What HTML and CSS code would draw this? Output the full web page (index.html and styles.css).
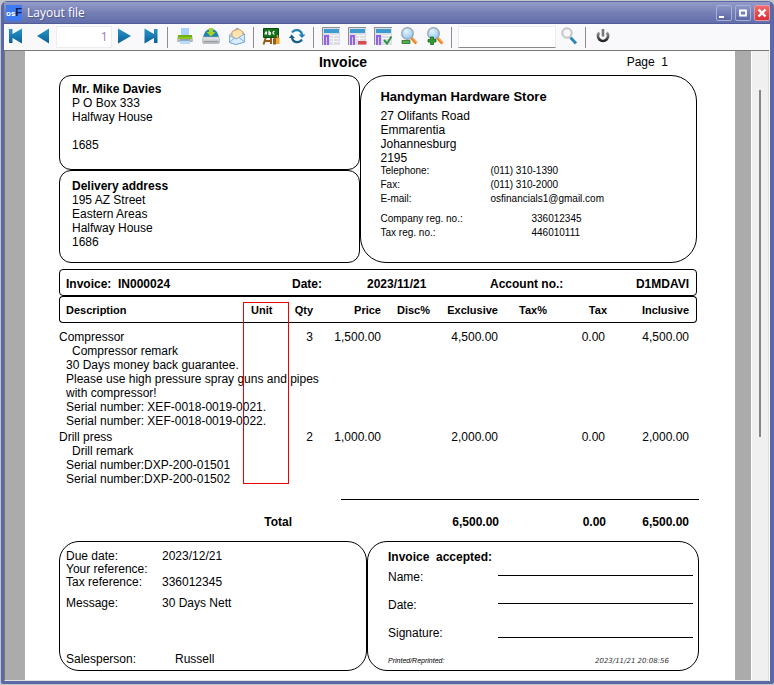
FILE: index.html
```html
<!DOCTYPE html>
<html lang="en">
<head>
<meta charset="utf-8">
<title>Layout file</title>
<link rel="stylesheet" href="styles.css">
</head>
<body>
<div class="window">
  <header class="titlebar">
    <span class="app-icon" aria-hidden="true"><span class="app-os">os</span><span class="app-f">F</span></span>
    <h1 class="window-title">Layout file</h1>
    <button class="win-btn" type="button" aria-label="Minimize"><svg width="16" height="16" viewBox="0 0 16 16"><path d="M3 11h5v2H3z" fill="#fff"/></svg></button>
    <button class="win-btn" type="button" aria-label="Maximize"><svg width="16" height="16" viewBox="0 0 16 16"><path d="M5 5.500h6v5H5z" fill="none" stroke="#fff" stroke-width="1.800"/></svg></button>
    <button class="win-btn win-close" type="button" aria-label="Close"><svg width="16" height="16" viewBox="0 0 16 16"><path d="M4.500 4.500l7 7M11.500 4.500l-7 7" stroke="#fff" stroke-width="2.400"/></svg></button>
  </header>

  <nav class="toolbar" aria-label="Preview">
    <svg class="defs" width="0" height="0" aria-hidden="true">
      <defs>
        <linearGradient id="blue" x1="0" y1="0" x2="0" y2="1"><stop offset="0" stop-color="#2a96c8"/><stop offset="1" stop-color="#0a5f96"/></linearGradient>
        <linearGradient id="metal" x1="0" y1="0" x2="0" y2="1"><stop offset="0" stop-color="#eef0f2"/><stop offset="1" stop-color="#a8adb2"/></linearGradient>
        <radialGradient id="lens" cx=".4" cy=".3" r=".8"><stop offset="0" stop-color="#e6f5ff"/><stop offset="1" stop-color="#86bff0"/></radialGradient>
        <linearGradient id="dark" x1="0" y1="0" x2="0" y2="1"><stop offset="0" stop-color="#999"/><stop offset="1" stop-color="#222"/></linearGradient>
      </defs>
    </svg>
    <button class="tool" type="button" aria-label="First page"><svg width="18" height="18" viewBox="0 0 18 18"><path d="M1 2h3.500v5L14 1.500v15L4.500 11v5H1z" fill="url(#blue)"/></svg></button>
    <button class="tool" type="button" aria-label="Previous page"><svg width="18" height="18" viewBox="0 0 18 18"><path d="M3 9L15 1.500v15z" fill="url(#blue)"/></svg></button>
    <input class="page-no" type="text" value="1" aria-label="Page number">
    <button class="tool" type="button" aria-label="Next page"><svg width="18" height="18" viewBox="0 0 18 18"><path d="M15 9L2 1.500v15z" fill="url(#blue)"/></svg></button>
    <button class="tool" type="button" aria-label="Last page"><svg width="18" height="18" viewBox="0 0 18 18"><path d="M15.500 2H12v5L2.500 1.500v15L12 11v5h3.500z" fill="url(#blue)"/></svg></button>
    <span class="sep"></span>
    <button class="tool" type="button" aria-label="Print"><svg width="18" height="18" viewBox="0 0 18 18"><path d="M5 1h8v8H5z" fill="#a9d3fa"/><rect x="1" y="8" width="16" height="7" rx="1.500" fill="url(#metal)"/><rect x="2" y="8" width="14" height="4" fill="#8ac71c"/><path d="M2 9h14" stroke="#5c9410"/><path d="M4 13h10v4H4z" fill="#b9dcfa"/><path d="M4 13h10" stroke="#6e7a84"/></svg></button>
    <button class="tool" type="button" aria-label="Save"><svg width="18" height="18" viewBox="0 0 18 18"><path d="M1 11C2 5 4.500 2 9 2s7 3 8 9z" fill="#2583b4"/><rect x=".5" y="10" width="17" height="6.500" rx="1.500" fill="url(#metal)" stroke="#a2a7ab" stroke-width=".5"/><path d="M2 14.500h14" stroke="#92979c" stroke-width=".8"/><path d="M7 1h4v4h2.500L9 9.500 4.500 5H7z" fill="#a4d51b"/></svg></button>
    <button class="tool" type="button" aria-label="E-mail"><svg width="18" height="18" viewBox="0 0 18 18"><path d="M1.500 8L9 1l7.500 6v8L8 17.500l-6.500-2z" fill="#c6e0f7" stroke="#7eaede"/><path d="M4 4.500l7-2.500 4 3v4.500l-6 3-5-3z" fill="#ffe3b0" stroke="#dc9c52"/><path d="M1.500 8.500l7 3.500 8-5v8L8 17.500l-6.500-2z" fill="#dceefc" stroke="#79aadc" stroke-width=".9"/><path d="M1.500 15.500l5-4.500M16.500 15l-5.500-4.500" stroke="#79aadc" fill="none"/></svg></button>
    <span class="sep"></span>
    <button class="tool" type="button" aria-label="Design"><svg width="18" height="18" viewBox="0 0 18 18"><path d="M4 10L1.500 17.500M9 10v7M3 14h7" stroke="#9a5a1c" stroke-width="2"/><path d="M1.500 1.500h15v9h-15z" fill="#14701a" stroke="#0b4a10"/><path d="M3 7.500c1-4 2-3 1.500 0M7 3.500v4c2 .500 2-2.500.300-2M12.500 4.500c-2-.500-2 3 0 2.500" fill="none" stroke="#fff" stroke-width="1.200"/><path d="M13 11h4.500v6H13z" fill="#eba925"/><path d="M11 12l2-2 1 2v5.500h-3z" fill="#9a5a1c"/><path d="M15.500 8v4" stroke="#e8913c" stroke-width="1.500"/></svg></button>
    <button class="tool" type="button" aria-label="Refresh"><svg width="18" height="18" viewBox="0 0 18 18"><path d="M4 5.500C6.500 1.500 13.500 2.500 14 8" fill="none" stroke="#1d80b7" stroke-width="2.200"/><path d="M4 10.500c.8 5.500 7.500 6 10 2" fill="none" stroke="#135f92" stroke-width="2.200"/><path d="M10.500 7.500h7L14 11z" fill="#1d80b7"/><path d="M1 11h6L3.500 7.500z" fill="#135f92"/></svg></button>
    <span class="sep"></span>
    <button class="tool" type="button" aria-label="Form"><svg width="20" height="18" viewBox="0 0 20 18"><path d="M1 0h18v18H1z" fill="#dcdee3"/><path d="M1.500 18V.500H19" fill="none" stroke="#8b8e95"/><path d="M3 2h15v4H3z" fill="#3d9bd0"/><path d="M3 8h5v10H3z" fill="#9360e8"/><path d="M5 10h1v8H5z" fill="#dccbfb"/><path d="M9 8.500h9M9 11.500h9M9 14.500h9M12.500 8v9" stroke="#f6f7f9"/></svg></button>
    <button class="tool" type="button" aria-label="Form remove"><svg width="20" height="18" viewBox="0 0 20 18"><path d="M1 0h18v18H1z" fill="#dcdee3"/><path d="M1.500 18V.500H19" fill="none" stroke="#8b8e95"/><path d="M3 2h15v4H3z" fill="#3d9bd0"/><path d="M3 8h5v10H3z" fill="#9360e8"/><path d="M5 10h1v8H5z" fill="#dccbfb"/><path d="M9 8.500h9M9 11.500h9M12.500 8v6" stroke="#f6f7f9"/><path d="M11 14h8.500v3.500H11z" fill="#d94b52"/></svg></button>
    <button class="tool" type="button" aria-label="Form accept"><svg width="20" height="18" viewBox="0 0 20 18"><path d="M1 0h18v18H1z" fill="#dcdee3"/><path d="M1.500 18V.500H19" fill="none" stroke="#8b8e95"/><path d="M3 2h15v4H3z" fill="#3d9bd0"/><path d="M3 8h5v10H3z" fill="#9360e8"/><path d="M5 10h1v8H5z" fill="#dccbfb"/><path d="M9 8.500h9M9 11.500h9M9 14.500h9" stroke="#f6f7f9"/><path d="M11 13l3 3.500 4.500-7" fill="none" stroke="#2d9344" stroke-width="2"/></svg></button>
    <button class="tool" type="button" aria-label="Zoom out"><svg width="18" height="18" viewBox="0 0 18 18"><path d="M11.500 11l5 5.500" stroke="#ef7d1c" stroke-width="3"/><path d="M12 10.500l5 5.500" stroke="#ffc173"/><circle cx="7.500" cy="6.500" r="5.800" fill="url(#lens)" stroke="#9aa2a9" stroke-width="1.300"/><path d="M2 13.500h8v3H2z" fill="#59ad45" stroke="#256f23" stroke-width=".8"/></svg></button>
    <button class="tool" type="button" aria-label="Zoom in"><svg width="18" height="18" viewBox="0 0 18 18"><path d="M11.500 11l5 5.500" stroke="#ef7d1c" stroke-width="3"/><path d="M12 10.500l5 5.500" stroke="#ffc173"/><circle cx="7.500" cy="6.500" r="5.800" fill="url(#lens)" stroke="#9aa2a9" stroke-width="1.300"/><path d="M4.500 10h3v2.500H10v2.500H7.500v2.500h-3V15H2v-2.500h2.500z" fill="#2f9c35" stroke="#17691d" stroke-width=".8"/></svg></button>
    <span class="sep"></span>
    <input class="search" type="text" aria-label="Search text">
    <button class="tool" type="button" aria-label="Search"><svg width="18" height="18" viewBox="0 0 18 18"><path d="M10.500 10.500l5.500 6" stroke="#2f87b4" stroke-width="3"/><circle cx="7" cy="6" r="4.700" fill="#f4f6f7" stroke="#c3c5c8" stroke-width="2"/></svg></button>
    <span class="sep"></span>
    <button class="tool" type="button" aria-label="Close preview"><svg width="18" height="18" viewBox="0 0 18 18"><path d="M5.300 5.500a5 5 0 1 0 7.400 0" fill="none" stroke="url(#dark)" stroke-width="2.800"/><path d="M9 2v7.500" stroke="#777" stroke-width="2.600"/></svg></button>
  </nav>

  <main class="viewer">
    <article class="sheet">
      <div class="sheet-head">
        <h2 class="doc-title">Invoice</h2>
        <span class="page-label">Page&nbsp; 1</span>
      </div>

      <section class="parties">
        <div class="box customer">
          <strong>Mr. Mike Davies</strong><br>P O Box 333<br>Halfway House<br><br>1685
        </div>
        <div class="box delivery">
          <strong>Delivery address</strong><br>195 AZ Street<br>Eastern Areas<br>Halfway House<br>1686
        </div>
        <div class="box company">
          <h3 class="company-name">Handyman Hardware Store</h3>
          <p class="company-address">27 Olifants Road<br>Emmarentia<br>Johannesburg<br>2195</p>
          <dl class="contacts">
            <dt>Telephone:</dt><dd>(011) 310-1390</dd>
            <dt>Fax:</dt><dd>(011) 310-2000</dd>
            <dt>E-mail:</dt><dd>osfinancials1@gmail.com</dd>
          </dl>
          <dl class="contacts registrations">
            <dt>Company reg. no.:</dt><dd>336012345</dd>
            <dt>Tax reg. no.:</dt><dd>446010111</dd>
          </dl>
        </div>
      </section>

      <section class="reference">
        <span>Invoice:&nbsp; IN000024</span>
        <span>Date:</span>
        <span>2023/11/21</span>
        <span>Account no.:</span>
        <span class="account">D1MDAVI</span>
      </section>

      <section class="lines">
        <table class="items">
          <colgroup>
            <col class="c-desc"><col class="c-unit"><col class="c-qty"><col class="c-amount"><col class="c-rate"><col class="c-amount"><col class="c-rate"><col class="c-tax"><col class="c-incl">
          </colgroup>
          <thead>
            <tr><th>Description</th><th>Unit</th><th>Qty</th><th>Price</th><th>Disc%</th><th>Exclusive</th><th>Tax%</th><th>Tax</th><th>Inclusive</th></tr>
          </thead>
          <tbody>
            <tr>
              <td>Compressor
                <div class="remark">Compressor remark</div>
                <div class="detail">30 Days money back guarantee.</div>
                <div class="detail">Please use high pressure spray guns and pipes</div>
                <div class="detail">with compressor!</div>
                <div class="detail">Serial number: XEF-0018-0019-0021.</div>
                <div class="detail">Serial number: XEF-0018-0019-0022.</div>
              </td>
              <td></td><td>3</td><td>1,500.00</td><td></td><td>4,500.00</td><td></td><td>0.00</td><td>4,500.00</td>
            </tr>
            <tr>
              <td>Drill press
                <div class="remark">Drill remark</div>
                <div class="detail">Serial number:DXP-200-01501</div>
                <div class="detail">Serial number:DXP-200-01502</div>
              </td>
              <td></td><td>2</td><td>1,000.00</td><td></td><td>2,000.00</td><td></td><td>0.00</td><td>2,000.00</td>
            </tr>
          </tbody>
        </table>
        <div class="unit-marker"></div>
      </section>

      <hr class="total-rule">
      <section class="totals">
        <span class="total-label">Total</span><span>6,500.00</span><span>0.00</span><span>6,500.00</span>
      </section>

      <section class="closing">
        <div class="box terms">
          <dl class="terms-list">
            <dt>Due date:</dt><dd>2023/12/21</dd>
            <dt>Your reference:</dt><dd></dd>
            <dt>Tax reference:</dt><dd>336012345</dd>
          </dl>
          <dl class="terms-list message">
            <dt>Message:</dt><dd>30 Days Nett</dd>
          </dl>
          <dl class="terms-list salesperson">
            <dt>Salesperson:</dt><dd>Russell</dd>
          </dl>
        </div>
        <div class="box accepted">
          <strong>Invoice&nbsp; accepted:</strong>
          <div class="sign-row"><span>Name:</span><span class="sign-line"></span></div>
          <div class="sign-row"><span>Date:</span><span class="sign-line"></span></div>
          <div class="sign-row signature"><span>Signature:</span><span class="sign-line"></span></div>
          <div class="printed"><span>Printed/Reprinted:</span><time>2023/11/21 20:08:56</time></div>
        </div>
      </section>
    </article>
    <div class="scrollbar"><div class="thumb"></div></div>
  </main>
</div>
</body>
</html>
```

FILE: styles.css
```css
* { box-sizing: border-box; }

body {
  margin: 0;
  min-height: 100vh;
  padding: 1px 0;
  display: flex;
  background: #c2c4ca;
  color: #000;
  font: 12px/14px "Liberation Sans", Arial, sans-serif;
}

h1, h2, h3, p, dl, dd { margin: 0; }

.window {
  flex: 1;
  display: flex;
  flex-direction: column;
  margin-left: 1px;
  border: solid #5a68a6;
  border-width: 1px 4px 3px 3px;
  border-radius: 6px 6px 2px 2px;
  background: #f9f9fc;
}

/* Title bar */
.titlebar {
  display: flex;
  align-items: center;
  height: 22px;
  padding: 0 0 0 2px;
  border-bottom: 1px solid #515d9a;
  background: linear-gradient(#939bc8, #7680b6 50%, #626eaa);
}

.app-icon {
  width: 16px;
  height: 16px;
  background: #3f7bf0;
  color: #fff;
  font-size: 8px;
  font-weight: bold;
  line-height: 15px;
  text-align: center;
}

.app-f { color: #10184c; font-size: 11px; }

.window-title {
  flex: 1;
  margin-left: 5px;
  color: #fff;
  font: 12px/18px "Open Sans", "Noto Sans", sans-serif;
  text-shadow: 1px 1px 1px #4c568c;
}

.win-btn {
  width: 16px;
  height: 16px;
  margin-left: 3px;
  padding: 0;
  border: 1px solid #a9b0d6;
  border-radius: 2px;
  background: linear-gradient(#8c95c6, #5c68a6);
}

.win-btn svg { display: block; margin: -1px; }
.win-close { border-color: #e89aa4; background: linear-gradient(#f46a6c, #d92f38); }

/* Toolbar */
.toolbar {
  display: flex;
  align-items: center;
  height: 26px;
}

.defs { position: absolute; }

.tool {
  width: 26px;
  height: 24px;
  padding: 0 1px 2px 0;
  border: 0;
  background: none;
  display: flex;
  align-items: center;
  justify-content: center;
}

.page-no, .search {
  height: 22px;
  border: 1px solid #ececf0;
  background: #fff;
}

.page-no {
  width: 56px;
  padding: 0 3px 3px;
  color: #9a7fc6;
  font: 13px "Open Sans", sans-serif;
  text-align: right;
}

.search {
  width: 98px;
  margin-left: 2px;
  border-bottom-color: #8a8a8a;
}

.sep {
  width: 1px;
  height: 21px;
  margin: 0 4px 0 3px;
  background: #8d8d90;
}

/* Page preview */
.viewer {
  flex: 1;
  display: flex;
  margin-right: 1px;
  border: solid #77777a;
  border-width: 1px 0 0 1px;
  border-bottom: 1px solid #e4e2e0;
  background: #ababab;
}

.sheet {
  flex: 1;
  margin: 0 16px 0 20px;
  padding: 0 36px 8px 34px;
  background: #fff;
}

.scrollbar {
  width: 18px;
  padding: 39px 8px 0;
  border-left: 1px solid #fff;
  border-right: 1px solid #e0e0e0;
  background: #f0f0f0;
}

.thumb { width: 2px; height: 347px; margin-left: -1px; background: #868686; }

.sheet-head {
  display: grid;
  grid-template-columns: 1fr auto 1fr;
  line-height: 22px;
  padding-bottom: 2px;
  margin-right: 72px;
}

.doc-title { grid-column: 2; font-size: 14px; line-height: 22px; }
.page-label { justify-self: end; margin-right: -41px; }

.box { border: 1px solid #000; }

.parties {
  display: grid;
  grid-template-columns: 301fr 336fr;
  grid-template-rows: minmax(95px, auto) minmax(93px, auto);
  margin-right: 2px;
}

.customer, .delivery { padding: 6px 12px; border-radius: 12px; }
.delivery { padding-top: 8px; }

.company {
  grid-area: 1 / 2 / 3 / 3;
  padding: 11px 19px 0;
  border-radius: 26px;
}

.company-name { font-size: 13px; line-height: 20px; }
.company-address { margin-top: 2px; }

.contacts {
  display: grid;
  grid-template-columns: 110px 1fr;
  row-gap: 2px;
  font-size: 10px;
  line-height: 12px;
}

.registrations {
  grid-template-columns: 151px 1fr;
  margin-top: 8px;
}

.reference {
  display: grid;
  grid-template-columns: 226fr 75fr 123fr 100fr 99fr;
  margin: 6px 2px 0 0;
  padding: 7px 7px 4px 6px;
  border: 1px solid #000;
  border-radius: 4px;
  font-weight: bold;
}

.account { text-align: right; }

/* Invoice lines */
.lines { position: relative; margin-right: 2px; }

.items {
  width: 100%;
  table-layout: fixed;
  border-collapse: separate;
  border-spacing: 0;
}

.c-desc { width: 184px; }
.c-unit { width: 40px; }
.c-qty { width: 30px; }
.c-amount { width: 68px; }
.c-rate { width: 49px; }
.c-tax { width: 60px; }
.c-incl { width: 90px; }

.items th {
  padding: 6px 0 5px;
  border: solid #000;
  border-width: 1px 0;
  font-size: 11px;
  line-height: 14px;
  text-align: right;
}

.items th:first-child { padding-left: 6px; border-left-width: 1px; border-radius: 4px 0 0 4px; text-align: left; }
.items th:nth-child(2) { padding-left: 8px; text-align: left; }
.items th:last-child { padding-right: 7px; border-right-width: 1px; border-radius: 0 4px 4px 0; }

.items td {
  padding: 2px 0 0;
  text-align: right;
  vertical-align: top;
  white-space: nowrap;
}

.items tbody tr:first-child td { padding-top: 7px; }
.items td:first-child { text-align: left; }
.items td:nth-child(8) { padding-right: 2px; }
.items td:last-child { padding-right: 8px; }
.remark { padding-left: 13px; }
.detail { padding-left: 7px; }

.unit-marker {
  position: absolute;
  top: 6px;
  left: 184px;
  bottom: 2px;
  width: 46px;
  border: 1px solid #f00000;
}

.total-rule {
  height: 1px;
  margin: 13px 0 0 44%;
  border: 0;
  background: #000;
}

.totals {
  display: grid;
  grid-template-columns: 233fr 207fr 107fr 83fr;
  margin-top: 15px;
  padding-right: 10px;
  font-weight: bold;
  text-align: right;
}

.closing {
  display: grid;
  grid-template-columns: 308fr 332fr;
  margin-top: 12px;
}

.terms, .accepted { min-height: 130px; border-radius: 20px; }

.terms { display: flex; flex-direction: column; padding: 8px 6px 4px; }

.terms-list {
  display: grid;
  grid-template-columns: 96px 1fr;
  line-height: 13px;
}

.message { margin-top: 8px; }
.salesperson { grid-template-columns: 109px 1fr; margin-top: auto; }

.accepted { padding: 8px 5px 4px 20px; }

.sign-row {
  display: grid;
  grid-template-columns: 110px 1fr;
  height: 28px;
  align-items: start;
  padding-top: 6px;
}

.sign-line { height: 6px; border-bottom: 1px solid #000; }
.signature .sign-line { height: 12px; }

.printed {
  display: flex;
  justify-content: space-between;
  margin: 8px 24px 0 0;
  font-size: 7px;
  line-height: 10px;
  font-style: italic;
}

.printed time { color: #333; font-family: "DejaVu Sans", sans-serif; }
```
